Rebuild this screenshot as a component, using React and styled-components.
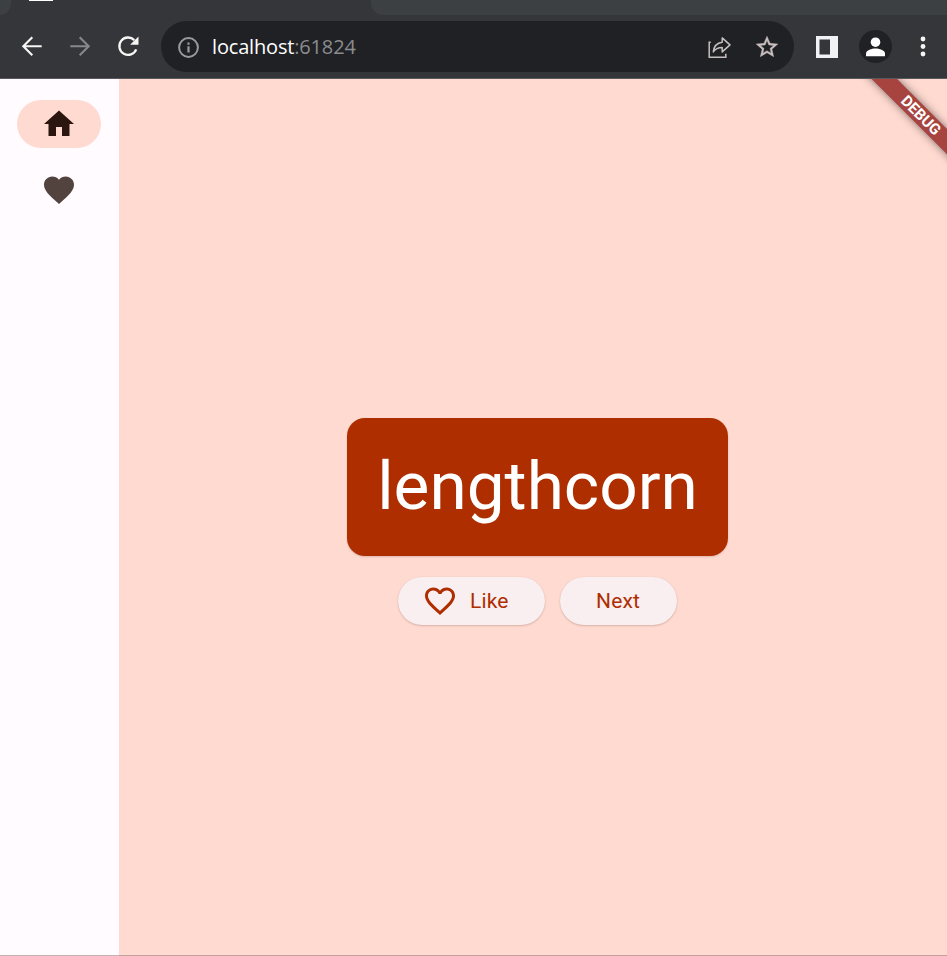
import React from "react";
import styled, { createGlobalStyle } from "styled-components";

const GlobalStyle = createGlobalStyle`
  * { box-sizing: border-box; }
  html, body { margin: 0; padding: 0; overflow: hidden; }
`;

const Window = styled.div`
  width: 947px;
  height: 956px;
  overflow: hidden;
  display: flex;
  flex-direction: column;
  background: #35363a;
  font-family: Roboto, "Liberation Sans", sans-serif;
`;

const TabStrip = styled.div`
  height: 15px;
  flex: none;
  display: flex;
  align-items: flex-start;
`;

const PreviousTab = styled.div`
  width: 11px;
  height: 15px;
  background: #3c4043;
  border-bottom-right-radius: 11px 12px;
`;

const Favicon = styled.div`
  width: 24px;
  height: 1px;
  margin-left: 18px;
  background: #fff;
`;

const EmptyStrip = styled.div`
  flex: 1;
  height: 15px;
  margin-left: 318px;
  background: #3c4043;
  border-bottom-left-radius: 12px;
`;

const Toolbar = styled.div`
  height: 64px;
  flex: none;
  display: flex;
  align-items: flex-start;
  padding: 6px 0 0 8px;
  border-bottom: 1px solid #58595c;
`;

const ToolButton = styled.div`
  width: 48px;
  height: 51px;
  flex: none;
  display: flex;
  align-items: center;
  justify-content: center;
  color: ${(p) => (p.$disabled ? "#87888a" : "#f8f5f5")};
  svg { display: block; }
`;

const Omnibox = styled.div`
  width: 633px;
  height: 51px;
  flex: none;
  margin: 0 9px;
  padding: 0 3px 0 16px;
  border-radius: 26px;
  background: #202124;
  display: flex;
  align-items: center;
`;

const Address = styled.div`
  flex: 1;
  margin-left: 12px;
  font-family: "Open Sans", "Noto Sans", sans-serif;
  font-size: 20px;
  line-height: 28px;
  letter-spacing: -0.17px;
  color: #fff;
`;

const Port = styled.span`
  color: #8b8c8f;
`;

const InfoIcon = styled.svg`
  display: block;
  margin-top: 2px;
`;

const Avatar = styled.div`
  width: 33px;
  height: 33px;
  border-radius: 50%;
  background: #202124;
  display: flex;
  align-items: center;
  justify-content: center;
`;

const Viewport = styled.div`
  flex: 1;
  min-height: 0;
  position: relative;
  overflow: hidden;
  display: flex;
  background: #ffdad1;
`;

const Rail = styled.nav`
  width: 119px;
  flex: none;
  padding: 21px 1px 0 0;
  display: flex;
  flex-direction: column;
  align-items: center;
  gap: 18px;
  background: #fffbff;
`;

const Destination = styled.div`
  width: 84px;
  height: 48px;
  border-radius: 24px;
  display: flex;
  align-items: center;
  justify-content: center;
  background: ${(p) => (p.$selected ? "#ffdad1" : "transparent")};
  color: ${(p) => (p.$selected ? "#2a150f" : "#53433f")};
`;

const Main = styled.main`
  width: 837px;
  height: 890px;
  flex: none;
  display: flex;
  flex-direction: column;
  align-items: center;
  justify-content: center;
`;

const WordCard = styled.div`
  width: 381px;
  height: 138px;
  border-radius: 18px;
  background: #ae2e00;
  color: #fff;
  display: flex;
  align-items: center;
  justify-content: center;
  padding-bottom: 2px;
  font-size: 67.5px;
  line-height: 78px;
  box-shadow: 0 1px 2px rgba(90, 40, 20, 0.2);
`;

const Actions = styled.div`
  display: flex;
  gap: 15px;
  padding: 6px 0;
  margin-top: 15px;
`;

const PillButton = styled.button`
  width: ${(p) => p.$width}px;
  height: 48px;
  border: 0;
  border-radius: 24px;
  padding: 0 ${(p) => (p.$icon ? "36px 0 24px" : "36px")};
  display: flex;
  align-items: center;
  gap: 12px;
  background: #f9eff0;
  color: #ae2e00;
  font: 400 21px/30px Roboto, "Liberation Sans", sans-serif;
  letter-spacing: 0.15px;
  white-space: nowrap;
  box-shadow: 0 1px 2px rgba(90, 40, 20, 0.22), 0 0 1px rgba(90, 40, 20, 0.1);
  svg { flex: none; }
`;

const Banner = styled.div`
  position: absolute;
  left: 837px;
  top: 42px;
  width: 240px;
  height: 18px;
  transform-origin: 119.500px -42px;
  transform: rotate(45deg);
  background: #a84440;
  box-shadow: 0 0 9px rgba(0, 0, 0, 0.5);
  color: #fff;
  font-size: 15.3px;
  line-height: 18px;
  font-weight: 700;
  text-align: center;
`;

const BottomEdge = styled.div`
  position: absolute;
  left: 0;
  right: 0;
  bottom: 0;
  height: 1px;
  background: rgba(125, 90, 90, 0.45);
`;

const Glyph = ({ d, size = 36 }) => (
  <svg width={size} height={size} viewBox="0 0 24 24" fill="currentColor">
    <path d={d} />
  </svg>
);

const HOME = "M10 20v-6h4v6h5v-8h3L12 3 2 12h3v8z";
const HEART =
  "M12 21.35l-1.45-1.32C5.4 15.36 2 12.28 2 8.5 2 5.42 4.42 3 7.5 3c1.74 0 3.41.81 4.5 2.09C13.09 3.81 14.76 3 16.5 3 19.58 3 22 5.42 22 8.5c0 3.78-3.4 6.86-8.55 11.54L12 21.35z";
const HEART_OUTLINE =
  "M16.5 3c-1.74 0-3.41.81-4.5 2.09C10.91 3.81 9.24 3 7.5 3 4.42 3 2 5.42 2 8.5c0 3.78 3.4 6.86 8.55 11.54L12 21.35l1.45-1.32C18.6 15.36 22 12.28 22 8.5 22 5.42 19.58 3 16.5 3zm-4.4 15.55l-.1.1-.1-.1C7.14 14.24 4 11.39 4 8.5 4 6.5 5.5 5 7.5 5c1.54 0 3.04.99 3.57 2.36h1.87C13.46 5.99 14.96 5 16.5 5c2 0 3.5 1.5 3.5 3.5 0 2.89-3.14 5.74-7.9 10.05z";
const STAR =
  "M22 9.24l-7.19-.62L12 2 9.19 8.63 2 9.24l5.46 4.73L5.82 21 12 17.27 18.18 21l-1.63-7.03L22 9.24zM12 15.4l-3.76 2.27 1-4.28-3.32-2.88 4.38-.38L12 6.1l1.71 4.04 4.38.38-3.32 2.88 1 4.28L12 15.4z";

export default function App() {
  return (
    <Window>
      <GlobalStyle />
      <TabStrip>
        <PreviousTab />
        <Favicon />
        <EmptyStrip />
      </TabStrip>
      <Toolbar>
        <ToolButton>
          <svg width="24" height="24" viewBox="0 0 24 24" fill="none" stroke="currentColor" strokeWidth="2.1">
            <path d="M21.7 11.3H3.4M12.3 2.300l-9 9 9 9" />
          </svg>
        </ToolButton>
        <ToolButton $disabled>
          <svg width="24" height="24" viewBox="0 0 24 24" fill="none" stroke="currentColor" strokeWidth="2.1">
            <path d="M2.3 11.3h18.3M11.7 2.300l9 9-9 9" />
          </svg>
        </ToolButton>
        <ToolButton>
          <svg width="24" height="24" viewBox="0 0 24 24">
            <path d="M20.2 14.300A8.7 8.7 0 1 1 18.3 5.100" fill="none" stroke="currentColor" strokeWidth="2.3" />
            <path d="M22.5 1.400v8.4h-8.4z" fill="currentColor" />
          </svg>
        </ToolButton>
        <Omnibox>
          <InfoIcon width="23" height="23" viewBox="0 0 23 23">
            <circle cx="11.5" cy="11.5" r="9.4" fill="none" stroke="#9a9b9e" strokeWidth="2" />
            <path d="M10.4 10.3h2.2v6.3h-2.2zM10.4 6.5h2.2v2.2h-2.2z" fill="#9a9b9e" />
          </InfoIcon>
          <Address>
            localhost<Port>:61824</Port>
          </Address>
          <ToolButton>
            <svg width="26" height="26" viewBox="0 0 26 26" fill="none" stroke="#c6bfbf" strokeWidth="1.5">
              <path d="M4.8 8.300H3.200v15h16.600v-3.600" />
              <path d="M16.200 3.900l7.800 7-7.800 7v-4.400c-4 0-6.700 1-8.900 4.400.6-5.300 3.800-9 8.900-9.600z" strokeLinejoin="round" />
            </svg>
          </ToolButton>
          <ToolButton>
            <svg width="26" height="26" viewBox="0 0 24 24" fill="#cbc0c0" stroke="#cbc0c0" strokeWidth="0.350">
              <path d={STAR} />
            </svg>
          </ToolButton>
        </Omnibox>
        <ToolButton>
          <svg width="22" height="22" viewBox="0 0 22 22">
            <path d="M0 0h22v22H0zM3.5 3.5v15H14v-15z" fill="#f1f2f3" fillRule="evenodd" />
          </svg>
        </ToolButton>
        <ToolButton>
          <Avatar>
            <svg width="20" height="20" viewBox="0 0 20 20" fill="#fff">
              <circle cx="10.500" cy="5.2" r="4.8" />
              <path d="M1 19.200v-2.700c0-3.400 6-5 9.500-5s9.500 1.600 9.500 5v2.700z" />
            </svg>
          </Avatar>
        </ToolButton>
        <ToolButton>
          <svg width="6" height="22" viewBox="0 0 6 22" fill="currentColor">
            <circle cx="3" cy="3" r="2.4" />
            <circle cx="3" cy="10.500" r="2.4" />
            <circle cx="3" cy="18" r="2.4" />
          </svg>
        </ToolButton>
      </Toolbar>
      <Viewport>
        <Rail>
          <Destination $selected>
            <Glyph d={HOME} />
          </Destination>
          <Destination>
            <Glyph d={HEART} />
          </Destination>
        </Rail>
        <Main>
          <WordCard>lengthcorn</WordCard>
          <Actions>
            <PillButton $width={147} $icon>
              <Glyph d={HEART_OUTLINE} />
              Like
            </PillButton>
            <PillButton $width={117}>Next</PillButton>
          </Actions>
        </Main>
        <Banner>DEBUG</Banner>
        <BottomEdge />
      </Viewport>
    </Window>
  );
}
